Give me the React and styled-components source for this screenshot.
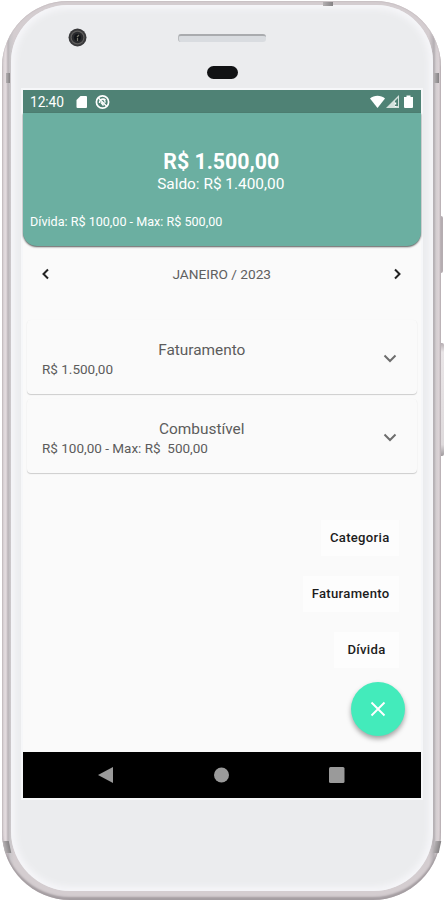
import React, { useState } from 'react'
import styled, { createGlobalStyle } from 'styled-components'

const GlobalStyle = createGlobalStyle`
  * {
    box-sizing: border-box;
  }

  body {
    margin: 0;
    background: #fff;
    font-family: Roboto, 'Liberation Sans', sans-serif;
    overflow: hidden;
  }
`

const Stage = styled.div`
  position: relative;
  width: 445px;
  height: 900px;
  padding: 1px 4px 0 2px;
  overflow: hidden;
`

const Device = styled.div`
  position: relative;
  height: 899px;
  padding: 4px 8px 9px 9px;
  border-radius: 66px 66px 68px 68px;
  background: linear-gradient(
    90deg,
    #cfc8cb 0,
    #dfd7da 2px,
    #e4dcdf 4px,
    #b9b3b7 6px,
    #c9c6c9 8px,
    #d4cdd0 12px,
    #d4cdd0 calc(100% - 12px),
    #b3aeb2 calc(100% - 7px),
    #d3cdd0 calc(100% - 5px),
    #dcd3d7 calc(100% - 2px),
    #bdb4b8 100%
  );
  box-shadow: inset 0 -3px 2px #a49da1, inset 0 1px 1px #c9c1c4;
`

const Face = styled.div`
  display: flex;
  flex-direction: column;
  height: 886px;
  padding: 0 12px;
  border-radius: 57px 57px 60px 60px;
  background: #ebecee;
  box-shadow: inset 0 0 6px 4px #f6f6f9;
`

const Band = styled.div`
  position: absolute;
  width: ${props => props.w}px;
  height: ${props => props.h}px;
  left: ${props => props.x}px;
  top: ${props => props.y}px;
  background: linear-gradient(90deg, #b4b0b2, #858284);
  transform: ${props => props.skew ? `skewX(${props.skew}deg)` : 'none'};
`

const SideButton = styled.div`
  position: absolute;
  left: 441px;
  top: ${props => props.y}px;
  width: ${props => props.w}px;
  height: ${props => props.h}px;
  border-radius: 0 2px 2px 0;
  background: ${props => props.color};
`

const TopBezel = styled.div`
  height: 85px;
  display: grid;
  grid-template-columns: 1fr 88px 1fr;
  grid-template-rows: 44px 1fr;
  justify-items: center;

  svg {
    justify-self: start;
    margin: 23px 0 0 45px;
  }
`

const Speaker = styled.div`
  width: 88px;
  height: 8px;
  margin-top: 29px;
  border-radius: 3px;
  background: #d9dce0;
  border-top: 2px solid #a9abae;
  border-left: 1px solid #b9bbbe;
`

const Sensor = styled.div`
  grid-column: 2;
  width: 31px;
  height: 13px;
  margin-top: 17px;
  border-radius: 7px;
  background: #111214;
`

const Screen = styled.div`
  display: flex;
  flex-direction: column;
  width: 397.5px;
  height: 708px;
  background: #fafafa;
  box-shadow: 0 0 0 2px #f6f7f9;
`

const StatusBar = styled.div`
  display: flex;
  align-items: center;
  height: 23px;
  padding: 0 7px;
  background: #4f8275;
  color: #fff;
`

const Clock = styled.span`
  width: 46px;
  font-size: 13.8px;
  letter-spacing: -0.1px;
`

const StatusRight = styled.div`
  display: flex;
  gap: 1px;
  margin-left: auto;
`

const Summary = styled.header`
  display: flex;
  flex-direction: column;
  align-items: center;
  height: 133px;
  padding-top: 36px;
  border-radius: 0 0 14px 14px;
  background: #6bafa1;
  color: #fff;
  box-shadow: 0 1px 2px rgba(0, 0, 0, 0.65);
`

const Total = styled.div`
  padding-right: 1px;
  font-size: 21.3px;
  line-height: 25px;
  font-weight: 700;
`

const Balance = styled.div`
  padding-right: 2px;
  font-size: 15.4px;
  line-height: 20px;
`

const Debt = styled.div`
  align-self: flex-start;
  margin: 19px 0 0 7px;
  font-size: 12.6px;
  line-height: 17px;
`

const MonthBar = styled.div`
  display: flex;
  align-items: center;
  justify-content: space-between;
  height: 56px;
  padding: 0 15px;
  margin-bottom: 18px;
  font-size: 13.7px;
  color: #606060;
`

const IconButton = styled.button`
  display: flex;
  padding: 0;
  border: none;
  background: none;
  cursor: pointer;
`

const CardList = styled.div`
  display: flex;
  flex-direction: column;
  gap: 5px;
  padding: 0 4px;
`

const Card = styled.div`
  display: flex;
  align-items: center;
  height: 74px;
  padding: 2px 19px 0 15px;
  border-radius: 4px;
  background: #fafafa;
  color: #5c5c5c;
  box-shadow: 0 1px 1px rgba(0, 0, 0, 0.18), 0 0 1px rgba(0, 0, 0, 0.05);
`

const CardBody = styled.div`
  flex: 1;
  padding-top: 2px;
`

const CardTitle = styled.div`
  padding-right: 20px;
  text-align: center;
  font-size: 15.4px;
  line-height: 20px;
`

const CardValue = styled.div`
  font-size: 13.5px;
  line-height: 19px;
  white-space: pre;
`

const Actions = styled.div`
  display: flex;
  flex-direction: column;
  align-items: flex-end;
  gap: 20px;
  margin-top: auto;
  padding: 0 22px 16px 0;
`

const ActionLabel = styled.button`
  height: 36px;
  padding: 0 ${props => props.inset || 9}px 2px;
  border: none;
  background: #fdfdfd;
  color: #1c1c1c;
  font-family: inherit;
  font-size: 13.1px;
  font-weight: 500;
  letter-spacing: 0.3px;
  cursor: pointer;
`

const Fab = styled.button`
  display: flex;
  align-items: center;
  justify-content: center;
  width: 54px;
  height: 54px;
  margin: -6px -6px 0 0;
  padding: 0;
  border: none;
  border-radius: 50%;
  background: #43ebbb;
  box-shadow: 0 3px 5px rgba(0, 0, 0, 0.35);
  cursor: pointer;
`

const NavBar = styled.div`
  display: flex;
  align-items: center;
  justify-content: space-between;
  height: 46px;
  padding: 0 76px 0 75px;
  background: #000;
`

const months = ['JANEIRO', 'FEVEREIRO', 'MARÇO', 'ABRIL', 'MAIO', 'JUNHO', 'JULHO', 'AGOSTO', 'SETEMBRO', 'OUTUBRO', 'NOVEMBRO', 'DEZEMBRO']

const categories = [
  { title: 'Faturamento', value: 'R$ 1.500,00' },
  { title: 'Combustível', value: 'R$ 100,00 - Max: R$  500,00' },
]

const Chevron = ({ d, color = '#222', width = 2 }) => (
  <svg width="16" height="16" viewBox="0 0 16 16" fill="none" stroke={color} strokeWidth={width}>
    <path d={d} />
  </svg>
)

const Camera = () => (
  <svg width="19" height="19" viewBox="0 0 19 19">
    <circle cx="9.5" cy="9.5" r="9" fill="#39393b" />
    <circle cx="9.5" cy="9.5" r="7" fill="#5f5e5d" />
    <circle cx="9.5" cy="9.5" r="5.8" fill="#292a2d" />
    <circle cx="9.5" cy="9.5" r="3.4" fill="#111317" />
    <path d="M9 9l2-2M9.5 10v3" stroke="#77766a" strokeWidth="1.2" />
  </svg>
)

const StatusIcons = () => (
  <svg width="34" height="16" viewBox="0 0 34 16" fill="none">
    <path d="M4.5 2H10a1 1 0 0 1 1 1v10a1 1 0 0 1-1 1H1.500a1 1 0 0 1-1-1V6z" fill="#fff" />
    <circle cx="26.500" cy="8" r="6.100" stroke="#fff" strokeWidth="1.700" />
    <path d="M22.500 4l8.200 8.300M23.500 9c0-4 4-5 6-3M25 8.500l2.500 3M26.500 5.200c2 0 3 1.800 2.300 3.500" stroke="#fff" strokeWidth="1.400" />
  </svg>
)

function App() {
  const [month, setMonth] = useState(0)

  return (
    <>
      <GlobalStyle />
      <Stage>
        <Device>
          <Face>
            <TopBezel>
              <Camera />
              <Speaker />
              <Sensor />
            </TopBezel>
            <Screen>
              <StatusBar>
                <Clock>12:40</Clock>
                <StatusIcons />
                <StatusRight>
                  <svg width="15" height="14" viewBox="0 0 15 14">
                    <path d="M0 3.500C4-.2 11-.2 15 3.500L7.500 13z" fill="#fff" />
                  </svg>
                  <svg width="14" height="14" viewBox="0 0 14 14">
                    <path d="M13 0v13H0z" fill="#d5e1dd" />
                    <path d="M9 6l3-3v8H9z" fill="#4f8275" />
                    <path d="M9.500 7.500v2M9.500 11v1" stroke="#fff" strokeWidth="1.500" />
                  </svg>
                  <svg width="13" height="14" viewBox="0 0 13 14">
                    <path d="M5.500.5h4V2H12v10a1 1 0 0 1-1 1H4a1 1 0 0 1-1-1V2h2.500z" fill="#fff" />
                  </svg>
                </StatusRight>
              </StatusBar>
              <Summary>
                <Total>R$ 1.500,00</Total>
                <Balance>Saldo: R$ 1.400,00</Balance>
                <Debt>Dívida: R$ 100,00 - Max: R$ 500,00</Debt>
              </Summary>
              <MonthBar>
                <IconButton onClick={() => setMonth((month + 11) % 12)}>
                  <Chevron d="M10 3.500L5.500 8l4.500 4.500" />
                </IconButton>
                <span>{months[month]} / 2023</span>
                <IconButton onClick={() => setMonth((month + 1) % 12)}>
                  <Chevron d="M6 3.500L10.500 8L6 12.500" />
                </IconButton>
              </MonthBar>
              <CardList>
                {categories.map(item => (
                  <Card key={item.title}>
                    <CardBody>
                      <CardTitle>{item.title}</CardTitle>
                      <CardValue>{item.value}</CardValue>
                    </CardBody>
                    <Chevron d="M2.500 5.500L8 11l5.500-5.500" color="#6d6d6d" />
                  </Card>
                ))}
              </CardList>
              <Actions>
                <ActionLabel>Categoria</ActionLabel>
                <ActionLabel>Faturamento</ActionLabel>
                <ActionLabel inset={13}>Dívida</ActionLabel>
                <Fab>
                  <svg width="16" height="16" viewBox="0 0 16 16" stroke="#fff" strokeWidth="1.900">
                    <path d="M1.500 1.500l13 13M14.500 1.500l-13 13" />
                  </svg>
                </Fab>
              </Actions>
              <NavBar>
                <svg width="15" height="16" viewBox="0 0 15 16">
                  <path d="M0 8L15 0v16z" fill="#9a9a9a" />
                </svg>
                <svg width="16" height="16" viewBox="0 0 16 16">
                  <circle cx="8.500" cy="8" r="7.500" fill="#9a9a9a" />
                </svg>
                <svg width="16" height="16" viewBox="0 0 16 16">
                  <rect width="15.500" height="16" rx="1.500" fill="#9a9a9a" />
                </svg>
              </NavBar>
            </Screen>
          </Face>
        </Device>
        <Band x={6} y={73} w={4} h={10} />
        <Band x={434} y={73} w={5} h={10} />
        <Band x={323} y={2} w={10} h={4} />
        <Band x={4} y={841} w={6} h={12} skew={12} />
        <Band x={434} y={841} w={6} h={12} skew={-12} />
        <SideButton y={216} w={2} h={57} color="#b5adb1" />
        <SideButton y={343} w={3} h={113} color="linear-gradient(#b5adb1, #e9e5e7 8%, #dedadc 90%, #a09b9e)" />
      </Stage>
    </>
  )
}

export default App
